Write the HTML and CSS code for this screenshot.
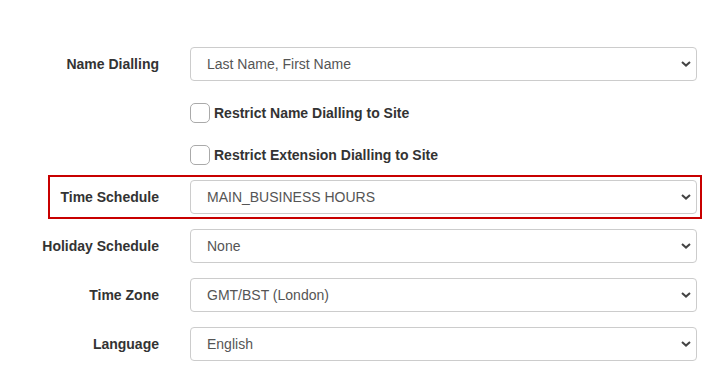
FILE: index.html
```html
<!DOCTYPE html>
<html>

<head>
	<meta charset="UTF-8">
	<link rel="stylesheet" href="styles.css">
</head>

<body>
	<!-- 站点设置表单 -->
	<div class="settings-form">
		<div class="form-row">
			<label class="form-label">Name Dialling</label>
			<div class="select-box">
				<select class="form-select">
					<option>Last Name, First Name</option>
				</select>
			</div>
		</div>

		<div class="check-group">
			<label class="check-item"><input type="checkbox"><span>Restrict Name Dialling to Site</span></label>
			<label class="check-item"><input type="checkbox"><span>Restrict Extension Dialling to Site</span></label>
		</div>

		<div class="form-row highlight">
			<label class="form-label">Time Schedule</label>
			<div class="select-box">
				<select class="form-select">
					<option>MAIN_BUSINESS HOURS</option>
				</select>
			</div>
		</div>
		<div class="form-row">
			<label class="form-label">Holiday Schedule</label>
			<div class="select-box">
				<select class="form-select">
					<option>None</option>
				</select>
			</div>
		</div>
		<div class="form-row">
			<label class="form-label">Time Zone</label>
			<div class="select-box">
				<select class="form-select">
					<option>GMT/BST (London)</option>
				</select>
			</div>
		</div>
		<div class="form-row">
			<label class="form-label">Language</label>
			<div class="select-box">
				<select class="form-select">
					<option>English</option>
				</select>
			</div>
		</div>
	</div>
</body>

</html>
```

FILE: styles.css
```css
html,
body {
	margin: 0;
	padding: 0;
	background: #ffffff;
	font-family: "Liberation Sans", Arial, sans-serif;
	font-size: 14px;
	color: #333333;
}

/* 表单整体 */
.settings-form {
	display: flex;
	flex-direction: column;
	width: 654px;
	padding: 42px 0 0 48px;
}

.form-row {
	display: flex;
	align-items: center;
	border: 2px solid transparent;
	padding: 3px 3px 3px 0;
}

.form-row + .form-row {
	margin-top: 5px;
}

/* 红框高亮 */
.form-row.highlight {
	border-color: #c80000;
}

/* 标签右对齐，过长时向左溢出 */
.form-label {
	display: flex;
	justify-content: flex-end;
	flex: 0 0 140px;
	min-width: 0;
	box-sizing: border-box;
	padding-right: 31px;
	white-space: nowrap;
	font-weight: bold;
	color: #333333;
}

.select-box {
	flex: 1;
}

.form-select {
	display: block;
	width: 100%;
	height: 34px;
	margin: 0;
	padding: 0 30px 0 16px;
	box-sizing: border-box;
	border: 1px solid #cccccc;
	border-radius: 4px;
	background: #ffffff url("data:image/svg+xml,%3Csvg xmlns='http://www.w3.org/2000/svg' width='10' height='6' viewBox='0 0 10 6'%3E%3Cpath d='M1 1l4 3.6L9 1' fill='none' stroke='%23444' stroke-width='2'/%3E%3C/svg%3E") no-repeat right 5px center;
	appearance: none;
	-webkit-appearance: none;
	font-family: "Liberation Sans", Arial, sans-serif;
	font-size: 14px;
	color: #555555;
}

/* 复选框 */
.check-group {
	display: flex;
	flex-direction: column;
	gap: 22px;
	padding: 17px 0 10px 142px;
}

.check-item {
	display: flex;
	align-items: center;
	height: 20px;
	font-weight: bold;
	color: #333333;
}

.check-item input {
	appearance: none;
	-webkit-appearance: none;
	width: 20px;
	height: 20px;
	margin: 0 4px 0 0;
	border: 1px solid #aaaaaa;
	border-radius: 5px;
	background: #ffffff;
}
```
